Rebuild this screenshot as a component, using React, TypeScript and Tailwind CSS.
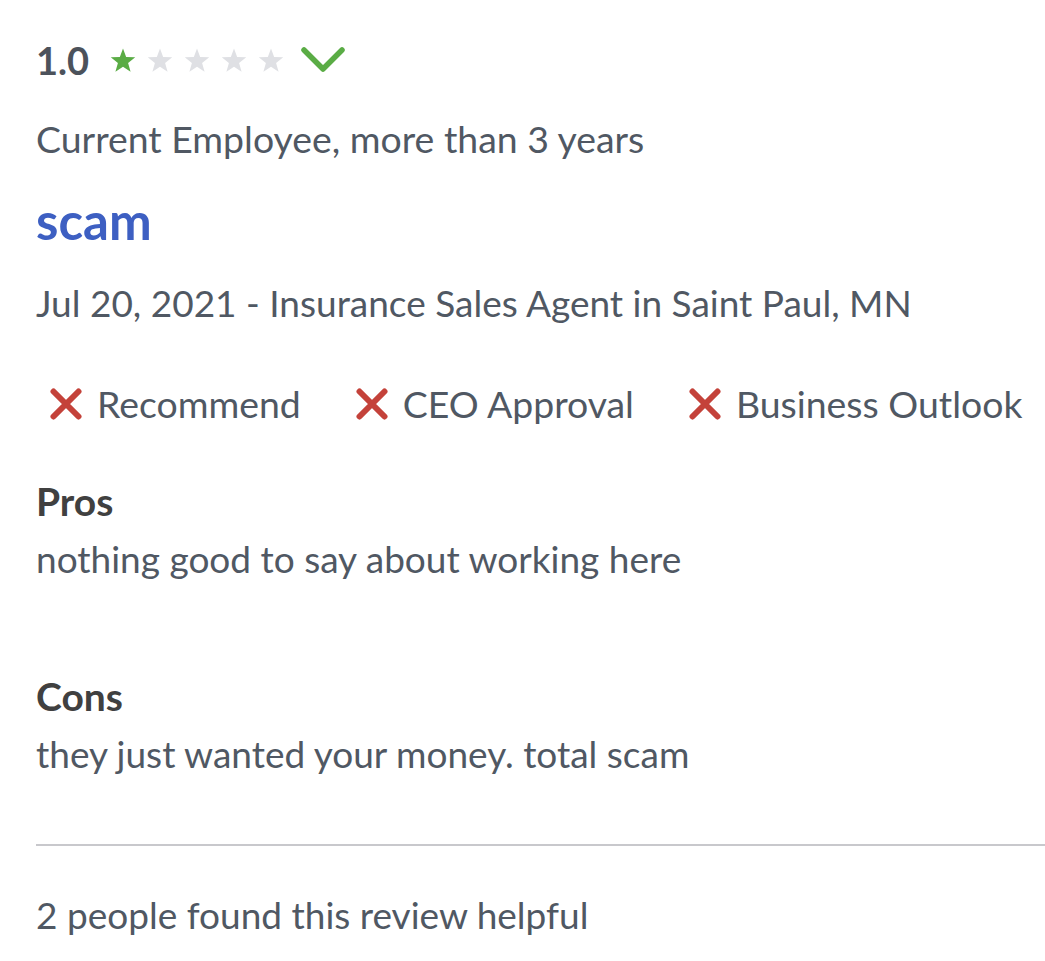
import React from "react";

const Star = ({ color }: { color: string }) => (
  <svg width="26" height="25" viewBox="0 0 24 23" className="block">
    <polygon
      points="12,0.5 14.9,8.3 23.3,8.6 16.7,13.8 19,21.9 12,17.2 5,21.9 7.3,13.8 0.7,8.6 9.1,8.3"
      fill={color}
    />
  </svg>
);

const XIcon = () => (
  <svg width="32" height="32" viewBox="0 0 32 32" className="block shrink-0">
    <path d="M3.5 3.5 L28.5 28.5 M28.5 3.5 L3.5 28.5" stroke="#c4423a" strokeWidth="6" strokeLinecap="round" />
  </svg>
);

export default function App() {
  return (
    <div
      className="w-[1045px] h-[961px] bg-white overflow-hidden pl-[36px] pt-[36px] text-[#505863]"
      style={{ fontFamily: "Lato, 'Open Sans', sans-serif" }}
    >
      <div className="flex items-center h-[48px]">
        <span className="text-[38px] font-bold leading-[48px] text-[#4c525b]">1.0</span>
        <div className="flex items-center gap-[11px] ml-[21px]">
          <Star color="#5aac45" />
          <Star color="#dfe0e4" />
          <Star color="#dfe0e4" />
          <Star color="#dfe0e4" />
          <Star color="#dfe0e4" />
        </div>
        <svg width="46" height="30" viewBox="0 0 46 30" className="ml-[16px] block">
          <polyline
            points="4,5 23,24 42,5"
            fill="none"
            stroke="#5aac45"
            strokeWidth="5.5"
            strokeLinecap="round"
            strokeLinejoin="round"
          />
        </svg>
      </div>

      <div className="mt-[31px] text-[37.4px] leading-[48px]">Current Employee, more than 3 years</div>

      <div className="mt-[30px] text-[51px] font-bold leading-[56px] text-[#3d5fc2]">scam</div>

      <div className="mt-[30px] text-[37px] leading-[48px]">
        Jul 20, 2021 - Insurance Sales Agent in Saint Paul, MN
      </div>

      <div className="mt-[53px] flex items-center gap-[55px] text-[37.4px] leading-[48px] pl-[14px]">
        <div className="flex items-center gap-[15px]">
          <XIcon />
          <span>Recommend</span>
        </div>
        <div className="flex items-center gap-[15px]">
          <XIcon />
          <span>CEO Approval</span>
        </div>
        <div className="flex items-center gap-[15px]">
          <XIcon />
          <span>Business Outlook</span>
        </div>
      </div>

      <div className="mt-[44px] text-[39px] font-bold leading-[58px] text-[#404040]">Pros</div>
      <div className="text-[37px] leading-[58px]">nothing good to say about working here</div>

      <div className="mt-[79px] text-[39px] font-bold leading-[58px] text-[#404040]">Cons</div>
      <div className="text-[37px] leading-[58px]">they just wanted your money. total scam</div>

      <div className="mt-[61px] h-[2px] bg-[#c8c8cc]" />

      <div className="mt-[45px] text-[37px] leading-[48px]">2 people found this review helpful</div>
    </div>
  );
}
